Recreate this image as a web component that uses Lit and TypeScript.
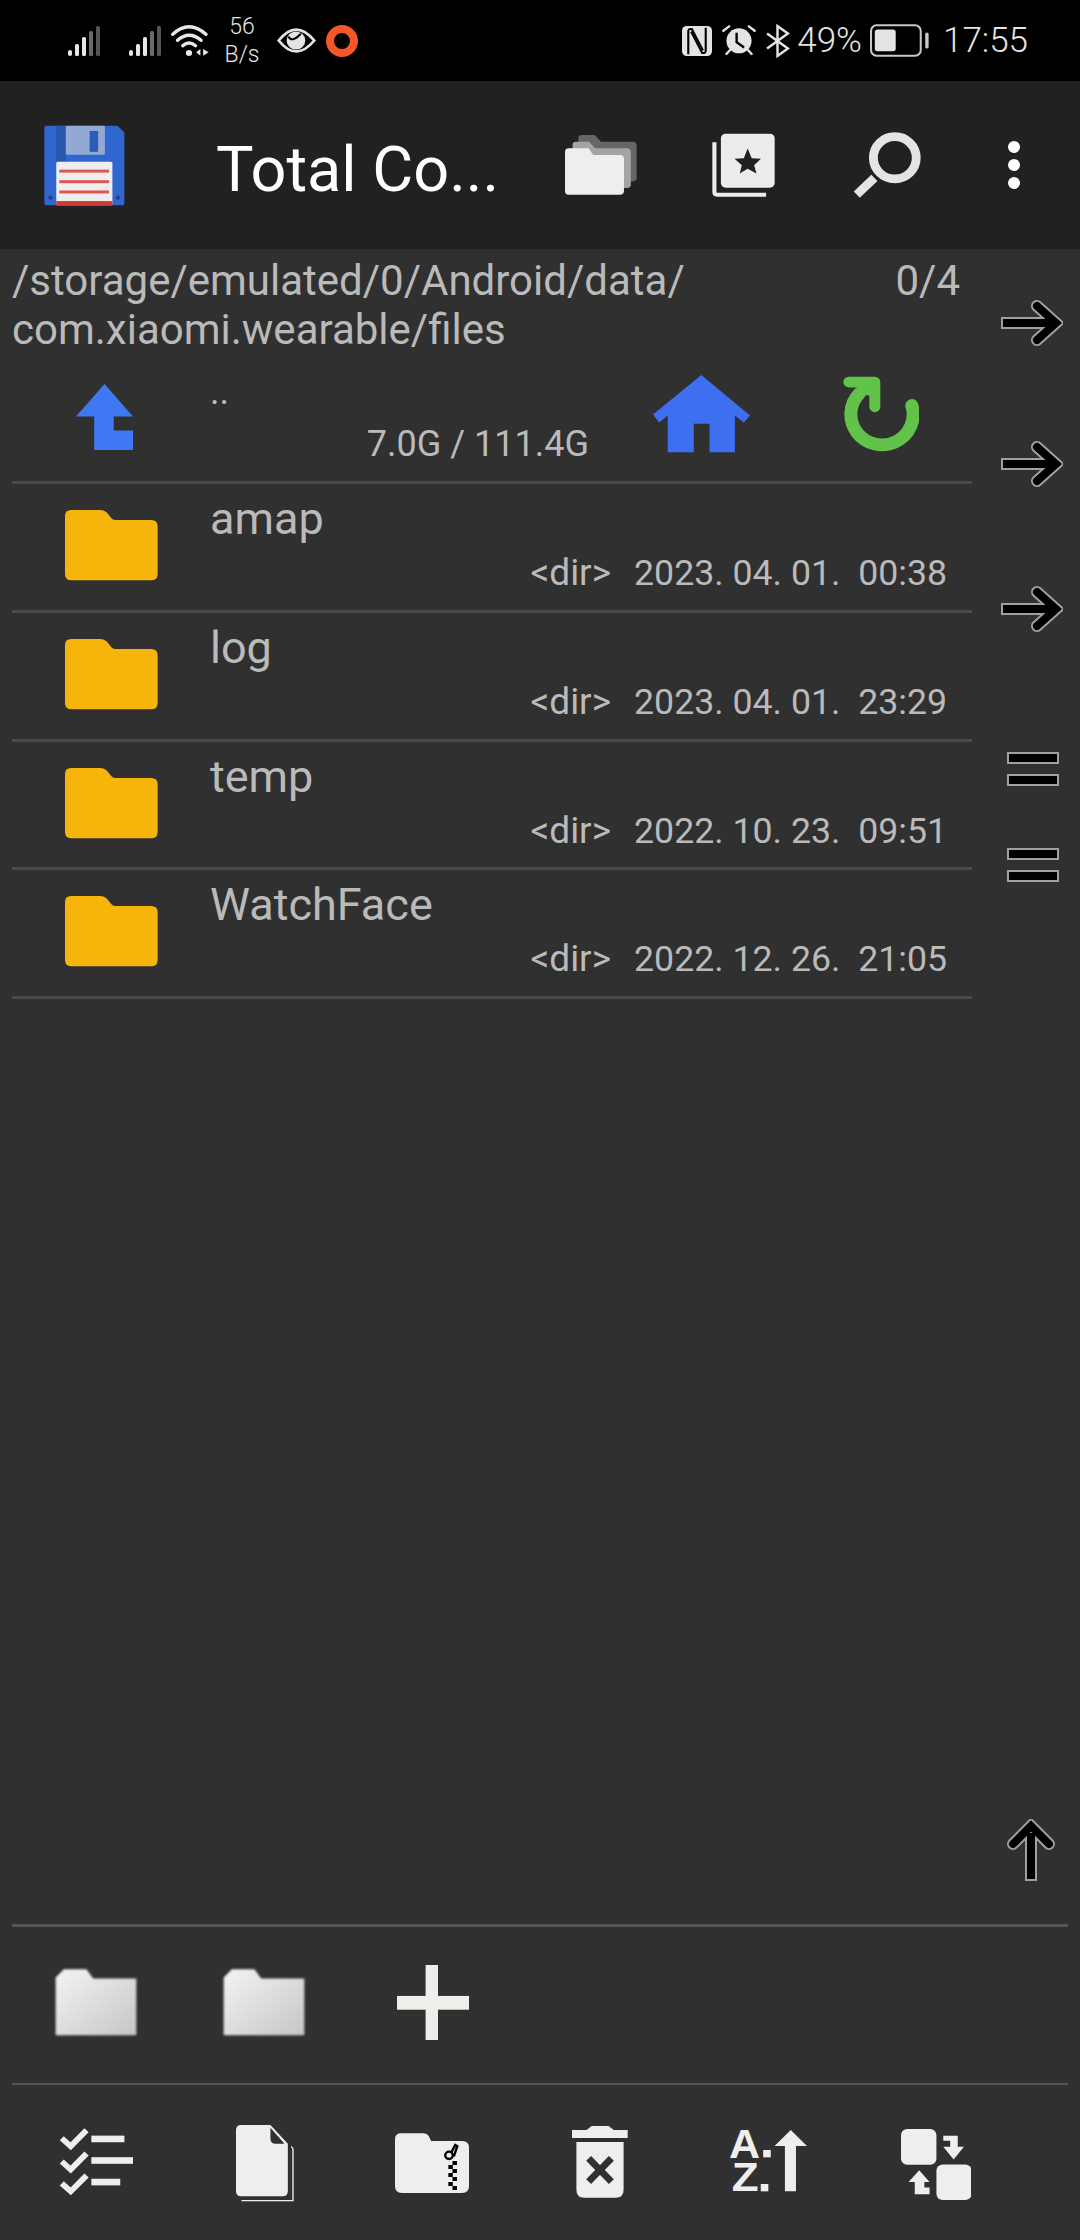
import { LitElement, html, css, svg } from 'lit';
import { customElement } from 'lit/decorators.js';

const FILES = [
  { name: 'amap', date: '2023. 04. 01.', time: '00:38' },
  { name: 'log', date: '2023. 04. 01.', time: '23:29' },
  { name: 'temp', date: '2022. 10. 23.', time: '09:51' },
  { name: 'WatchFace', date: '2022. 12. 26.', time: '21:05' },
];

// viewBoxes are measured from the zoomed crops, hence preserveAspectRatio none
const signal = html`<svg class="signal" width="32" height="30" viewBox="0 0 32 30">
  <rect x="0" y="24" width="4" height="6" rx="2" fill="#e6e6e6"></rect>
  <rect x="7" y="18" width="4" height="12" rx="1.5" fill="#e6e6e6"></rect>
  <rect x="14" y="11" width="4" height="19" rx="1.5" fill="#e6e6e6"></rect>
  <rect x="21" y="5" width="4" height="25" rx="1.5" fill="#6a6a6a"></rect>
  <rect x="28" y="0" width="4" height="30" rx="1.5" fill="#555"></rect>
</svg>`;

const rightArrow = html`<svg class="arrow" width="62" height="48" viewBox="0 0 62 48">
  <g fill="none" stroke="#a0a0a0" stroke-width="12" stroke-linecap="round">
    <path d="M0 24H52" stroke-linecap="butt"></path>
    <path d="M36 7L55 24L36 41"></path>
  </g>
  <g fill="none" stroke="#000" stroke-width="8" stroke-linecap="round">
    <path d="M2 24H52" stroke-linecap="butt"></path>
    <path d="M36 7L55 24L36 41"></path>
  </g>
</svg>`;

const bars = html`<svg class="bars" width="52" height="34" viewBox="0 0 52 34">
  <rect x="1" y="1" width="50" height="10" fill="#000" stroke="#a0a0a0" stroke-width="2"></rect>
  <rect x="1" y="23" width="50" height="10" fill="#000" stroke="#a0a0a0" stroke-width="2"></rect>
</svg>`;

const folderPath = svg`<path d="M206 780H292Q302 780 310 788L322 804Q326 810 334 810H438Q457 810 457 829V972Q457 991 438 991H207Q188 991 188 972V799Q188 780 206 780Z"></path>`;

const grayFolder = html`<svg class="gray-folder" width="82" height="69" viewBox="158 203 240 208" preserveAspectRatio="none">
  <defs>
    <linearGradient id="gf" x1="0" y1="0" x2="1" y2="1">
      <stop offset="0" stop-color="#f4f4f4"></stop>
      <stop offset="1" stop-color="#c6c6c6"></stop>
    </linearGradient>
  </defs>
  <path fill="url(#gf)" d="M160 232L184 207H250L270 235H396V406H160Z"></path>
</svg>`;

@customElement('app-root')
export class AppRoot extends LitElement {
  static styles = css`
    :host {
      display: block;
      width: 1080px;
      height: 2240px;
      background: #303030;
      font-family: Roboto, "Noto Sans", sans-serif;
      color: #bababa;
      overflow: hidden;
    }
    svg {
      display: block;
      flex: none;
    }

    .status {
      height: 81px;
      background: #000;
      color: #e4e4e4;
      display: flex;
      align-items: center;
      padding-left: 68px;
      padding-right: 52px;
      font-weight: 300;
    }
    .signal + .signal { margin-left: 29px; }
    .wifi { margin-left: 10px; }
    .speed {
      width: 60px;
      margin-left: 3px;
      text-align: center;
      font-size: 23px;
      line-height: 28px;
    }
    .eye { margin-left: 4.5px; }
    .ring { margin-left: 10.5px; }
    .status-right {
      margin-left: auto;
      display: flex;
      align-items: center;
      font-size: 35px;
    }
    .nfc { margin-left: 4px; }
    .alarm { margin-left: 10px; }
    .bt { margin-left: 9px; }
    .pct { margin-left: 7px; }
    .battery { margin-left: 8px; }
    .clock { margin-left: 13px; }

    .toolbar {
      height: 168px;
      background: #212121;
      display: flex;
      align-items: flex-start;
      padding-left: 44px;
    }
    .floppy { margin-top: 44px; }
    .title {
      width: 349px;
      margin-left: 91px;
      margin-top: 33px;
      font-size: 63px;
      line-height: 112px;
      color: #fff;
      white-space: nowrap;
    }
    .folders { margin-top: 54px; }
    .star { margin: 52px 0 0 74.5px; }
    .search { margin: 51px 0 0 79.5px; }
    .dots { margin: 60px 0 0 87px; }

    .main {
      height: 1675px;
      display: flex;
    }
    .panel {
      width: 960px;
      margin-left: 12px;
    }
    .path-row {
      height: 106px;
      display: flex;
      justify-content: space-between;
      font-size: 42px;
      line-height: 49px;
      padding-top: 7px;
      box-sizing: border-box;
      padding-right: 12px;
    }
    .parent {
      height: 129px;
      box-sizing: border-box;
      border-bottom: 3px solid #4a4a4a;
      display: flex;
      align-items: flex-start;
    }
    .up { margin: 29px 0 0 64px; }
    .parent-body {
      width: 379px;
      margin-left: 77px;
    }
    .dotdot {
      font-size: 36px;
      line-height: 40px;
      margin-top: 17px;
    }
    .space {
      font-size: 36px;
      line-height: 44px;
      text-align: right;
      margin-top: 10px;
    }
    .home { margin: 20px 0 0 64px; }
    .refresh { margin: 21px 0 0 93px; }

    .row {
      height: 128.75px;
      box-sizing: border-box;
      border-bottom: 3px solid #4a4a4a;
      display: flex;
      align-items: flex-start;
    }
    .row svg {
      fill: #f7b50c;
      margin: 26px 52px 0 53px;
    }
    .row-body {
      flex: 1;
      padding-right: 25px;
    }
    .name {
      font-size: 45px;
      line-height: 50px;
      margin-top: 10px;
    }
    .meta {
      display: flex;
      justify-content: flex-end;
      align-items: baseline;
      gap: 23px;
      font-size: 35.7px;
      line-height: 44px;
      margin-top: 7px;
    }
    .dir { font-size: 37px; }
    .stamp { white-space: pre; }

    .side {
      width: 108px;
      display: flex;
      flex-direction: column;
      padding-top: 50px;
      padding-left: 29px;
      padding-bottom: 43px;
      box-sizing: border-box;
    }
    .arrow + .arrow { margin-top: 93px; }
    .arrow + .arrow + .arrow { margin-top: 97px; }
    .bars { margin: 119px 0 0 6px; }
    .bars + .bars { margin-top: 62px; }
    .up-small {
      margin-top: auto;
      margin-left: 6px;
    }

    .shortcuts {
      height: 159px;
      box-sizing: border-box;
      margin: 0 12px;
      border-top: 3px solid #555;
      display: flex;
      align-items: flex-start;
    }
    .gray-folder {
      margin: 41px 0 0 43px;
      filter: blur(1.2px);
    }
    .gray-folder + .gray-folder { margin-left: 86px; }
    .plus {
      margin: 38px 0 0 92px;
      filter: blur(0.7px);
    }

    .tools {
      height: 157px;
      box-sizing: border-box;
      margin: 0 12px;
      border-top: 2px solid #555;
      display: flex;
      align-items: flex-start;
    }
    .t-check { margin: 43px 0 0 46.5px; }
    .t-doc { margin: 40px 0 0 103px; }
    .t-zip { margin: 48px 0 0 101.5px; }
    .t-trash { margin: 41px 0 0 103px; }
    .t-az { margin: 43px 0 0 101px; overflow: visible; }
    .t-swap { margin: 44px 0 0 93.5px; }
  `;

  render() {
    return html`
      <div class="status">
        ${signal}${signal}
        <svg class="wifi" width="38" height="32" viewBox="497 72 110 96" preserveAspectRatio="none">
          <g fill="none" stroke="#e8e8e8" stroke-linecap="round">
            <path stroke-width="10" d="M502 100Q549 55 598 100"></path>
            <path stroke-width="10" d="M516 118Q549 88 584 118"></path>
            <path stroke-width="10" d="M531 134Q549 118 568 134"></path>
          </g>
          <circle cx="549" cy="156" r="9" fill="#e8e8e8"></circle>
          <path fill="#e8e8e8" d="M582 144V164L570 154ZM590 144L606 154L590 164Z"></path>
        </svg>
        <div class="speed">56<br />B/s</div>
        <svg class="eye" width="39" height="27" viewBox="803 80 113 80" preserveAspectRatio="none">
          <path fill="#000" stroke="#e4e4e4" stroke-width="8" d="M808 120Q858 55 911 120Q858 185 808 120Z"></path>
          <circle cx="858" cy="120" r="27" fill="#e4e4e4"></circle>
          <path fill="none" stroke="#000" stroke-width="6" d="M836 108Q846 128 872 100"></path>
        </svg>
        <svg class="ring" width="32" height="32" viewBox="0 0 32 32">
          <circle cx="16" cy="16" r="12" fill="none" stroke="#f4572a" stroke-width="8"></circle>
        </svg>
        <div class="status-right">
          <svg class="nfc" width="30" height="30" viewBox="430 75 86 90" preserveAspectRatio="none">
            <rect x="430" y="75" width="86" height="90" rx="14" fill="#e4e4e4"></rect>
            <path fill="none" stroke="#000" stroke-width="6" d="M448 160V92Q448 82 458 84L490 148"></path>
            <path fill="none" stroke="#000" stroke-width="6" d="M498 80V148Q498 158 488 156L456 92"></path>
          </svg>
          <svg class="alarm" width="34" height="31" viewBox="545 75 100 92" preserveAspectRatio="none">
            <circle cx="595" cy="122" r="37" fill="#e4e4e4"></circle>
            <path fill="none" stroke="#000" stroke-width="7" d="M588 98V126L610 142"></path>
            <path fill="none" stroke="#e4e4e4" stroke-width="7" stroke-linecap="round"
              d="M549 92L566 79M641 92L624 79M558 161L568 150M632 161L622 150"></path>
          </svg>
          <svg class="bt" width="25" height="34" viewBox="672 70 72 100" preserveAspectRatio="none">
            <path fill="none" stroke="#e4e4e4" stroke-width="7"
              d="M678 98L738 142L708 164V76L738 98L678 142"></path>
          </svg>
          <span class="pct">49%</span>
          <svg class="battery" width="60" height="33" viewBox="970 72 175 98" preserveAspectRatio="none">
            <rect x="973" y="76" width="145" height="90" rx="16" fill="none" stroke="#c8c8c8" stroke-width="6"></rect>
            <rect x="984" y="88" width="61" height="65" rx="8" fill="#e4e4e4"></rect>
            <rect x="1131" y="97" width="10" height="48" rx="5" fill="#c8c8c8"></rect>
          </svg>
          <span class="clock">17:55</span>
        </div>
      </div>

      <div class="toolbar">
        <svg class="floppy" width="81" height="81" viewBox="126 373 238 245" preserveAspectRatio="none">
          <path fill="#2f66d0" d="M134 375H342L362 396V608Q362 616 354 616H134Q127 616 127 608V382Q127 375 134 375Z"></path>
          <rect x="162" y="375" width="28" height="108" fill="#2a55ad"></rect>
          <rect x="190" y="375" width="115" height="88" rx="4" fill="#93a9d3"></rect>
          <rect x="260" y="391" width="25" height="63" fill="#2b5cb8"></rect>
          <rect x="162" y="484" width="165" height="132" rx="5" fill="#eee"></rect>
          <rect x="171" y="508" width="146" height="9" fill="#df5650"></rect>
          <rect x="171" y="540" width="146" height="9" fill="#df5650"></rect>
          <rect x="171" y="571" width="146" height="9" fill="#df5650"></rect>
          <rect x="162" y="603" width="165" height="13" fill="#d23a36"></rect>
          <circle cx="145" cy="593" r="6" fill="#1f3f80"></circle>
          <circle cx="343" cy="593" r="6" fill="#1f3f80"></circle>
        </svg>
        <div class="title">Total Co...</div>
        <svg class="folders" width="72" height="60" viewBox="73 405 210 181" preserveAspectRatio="none">
          <path fill="#666" d="M122 405H160L178 425H270Q282 425 282 437V535Q282 545 270 545H122Q112 545 112 535V415Q112 405 122 405Z"></path>
          <path fill="#a4a4a4" d="M105 425H143L161 445H253Q265 445 265 457V555Q265 565 253 565H105Q95 565 95 555V435Q95 425 105 425Z"></path>
          <path fill="#eee" d="M84 445H142L155 465H233Q245 465 245 477V574Q245 585 233 585H84Q73 585 73 574V456Q73 445 84 445Z"></path>
        </svg>
        <svg class="star" width="63" height="64" viewBox="497 400 184 193" preserveAspectRatio="none">
          <rect x="523" y="402" width="157" height="163" rx="14" fill="#ececec"></rect>
          <path fill="none" stroke="#ececec" stroke-width="12" d="M504 428V578Q504 586 512 586H655"></path>
          <path fill="#212121" d="M601 447L613 476L640 478L620 497L627 522L601 508L578 522L584 497L563 478L590 476Z"></path>
        </svg>
        <svg class="search" width="67" height="66" viewBox="910 395 197 197" preserveAspectRatio="none">
          <circle cx="1030" cy="472" r="63" fill="none" stroke="#e4e4e4" stroke-width="26"></circle>
          <path stroke="#e4e4e4" stroke-width="26" d="M970 532L918 582"></path>
        </svg>
        <svg class="dots" width="12" height="50" viewBox="0 0 12 50">
          <circle cx="6" cy="6" r="6" fill="#fff"></circle>
          <circle cx="6" cy="24" r="6" fill="#fff"></circle>
          <circle cx="6" cy="42" r="6" fill="#fff"></circle>
        </svg>
      </div>

      <div class="main">
        <div class="panel">
          <div class="path-row">
            <div>/storage/emulated/0/Android/data/<br />com.xiaomi.wearable/files</div>
            <div>0/4</div>
          </div>
          <div class="parent">
            <svg class="up" width="57" height="66" viewBox="222 403 166 197" preserveAspectRatio="none">
              <path fill="#3f78f2" d="M305 403L388 500H332V542H388V600H275V500H222Z"></path>
            </svg>
            <div class="parent-body">
              <div class="dotdot">..</div>
              <div class="space">7.0G / 111.4G</div>
            </div>
            <svg class="home" width="97" height="78" viewBox="327 373 283 235" preserveAspectRatio="none">
              <path fill="#3d6ff0" d="M468 373L610 495L592 516L566 495V606H492V520H446V606H370V495L345 516L327 492Z"></path>
            </svg>
            <svg class="refresh" width="76" height="77" viewBox="880 378 222 230" preserveAspectRatio="none">
              <g fill="none" stroke="#62c24a" stroke-linecap="round" stroke-linejoin="round">
                <path stroke-width="38" d="M1081 466A91 91 0 1 1 928 430"></path>
                <path stroke-width="32" d="M897 396H973V470"></path>
              </g>
              <path fill="#62c24a" d="M925 400H980V440L925 432Z"></path>
            </svg>
          </div>
          ${FILES.map(
            (f) => html`
              <div class="row">
                <svg width="93" height="71" viewBox="188 780 270 213" preserveAspectRatio="none">${folderPath}</svg>
                <div class="row-body">
                  <div class="name">${f.name}</div>
                  <div class="meta">
                    <span class="dir">&lt;dir&gt;</span>
                    <span class="stamp">${f.date}  ${f.time}</span>
                  </div>
                </div>
              </div>
            `
          )}
        </div>
        <div class="side">
          ${rightArrow}${rightArrow}${rightArrow}${bars}${bars}
          <svg class="up-small" width="48" height="62" viewBox="0 0 48 62">
            <g fill="none" stroke="#a0a0a0" stroke-width="12" stroke-linecap="round">
              <path d="M24 62V14" stroke-linecap="butt"></path>
              <path d="M6 25L24 7L42 25"></path>
            </g>
            <g fill="none" stroke="#000" stroke-width="8" stroke-linecap="round">
              <path d="M24 60V14" stroke-linecap="butt"></path>
              <path d="M6 25L24 7L42 25"></path>
            </g>
          </svg>
        </div>
      </div>

      <div class="shortcuts">
        ${grayFolder}${grayFolder}
        <svg class="plus" width="72" height="75" viewBox="1153 197 209 223" preserveAspectRatio="none">
          <rect x="1236" y="197" width="36" height="223" fill="#eeeeea"></rect>
          <rect x="1153" y="289" width="209" height="41" fill="#eeeeea"></rect>
        </svg>
      </div>

      <div class="tools">
        <svg class="t-check" width="74" height="68" viewBox="170 685 215 205" preserveAspectRatio="none">
          <g fill="none" stroke="#eee" stroke-width="17">
            <path d="M178 716L204 740L250 692"></path>
            <path d="M178 786L204 810L250 762"></path>
            <path d="M178 852L204 876L250 828"></path>
          </g>
          <g fill="#eee">
            <rect x="264" y="708" width="96" height="20"></rect>
            <rect x="264" y="773" width="121" height="20"></rect>
            <rect x="264" y="838" width="84" height="20"></rect>
          </g>
        </svg>
        <svg class="t-doc" width="58" height="77" viewBox="684 674 170 230" preserveAspectRatio="none">
          <path fill="none" stroke="#eee" stroke-width="4" d="M846 738Q851 742 851 748V900H700"></path>
          <path fill="#eee" d="M700 674H785L836 730V872Q836 887 821 887H699Q684 887 684 872V690Q684 674 700 674Z"></path>
          <path fill="#303030" d="M785 682L826 730H800Q785 730 785 715Z"></path>
        </svg>
        <svg class="t-zip" width="74" height="60" viewBox="1147 698 215 180" preserveAspectRatio="none">
          <path fill="#eee" d="M1165 699H1230Q1240 699 1245 707L1252 722H1342Q1362 722 1362 742V858Q1362 878 1342 878H1167Q1147 878 1147 858V717Q1147 699 1165 699Z"></path>
          <circle cx="1304" cy="765" r="11" fill="none" stroke="#000" stroke-width="7"></circle>
          <path fill="none" stroke="#000" stroke-width="7" d="M1310 758L1322 734L1328 738L1318 768"></path>
          <g fill="#000">
            <rect x="1314" y="782" width="13" height="12"></rect>
            <rect x="1302" y="794" width="13" height="12"></rect>
            <rect x="1314" y="806" width="13" height="12"></rect>
            <rect x="1302" y="818" width="13" height="12"></rect>
            <rect x="1314" y="830" width="13" height="12"></rect>
            <rect x="1302" y="845" width="13" height="12"></rect>
            <rect x="1314" y="857" width="13" height="12"></rect>
          </g>
        </svg>
        <svg class="t-trash" width="56" height="72" viewBox="92 1038 165 216" preserveAspectRatio="none">
          <path fill="#eee" d="M92 1050H135L150 1038H200L215 1050H256V1074H92Z"></path>
          <path fill="#eee" d="M105 1086H244V1230Q244 1253 221 1253H128Q105 1253 105 1230Z"></path>
          <path stroke="#303030" stroke-width="20" d="M141 1135L208 1205M208 1135L141 1205"></path>
        </svg>
        <svg class="t-az" width="78" height="64" viewBox="550 1044 226 192" preserveAspectRatio="none">
          <g fill="#eee" font-family="Liberation Sans, sans-serif" font-weight="700" font-size="122">
            <text x="550" y="1133" textLength="90" lengthAdjust="spacingAndGlyphs">A</text>
            <text x="558" y="1234" textLength="78" lengthAdjust="spacingAndGlyphs">Z</text>
          </g>
          <rect x="649" y="1110" width="22" height="22" fill="#eee"></rect>
          <rect x="642" y="1212" width="22" height="22" fill="#eee"></rect>
          <path fill="#eee" d="M729 1050L776 1098H744V1234H712V1098H682Z"></path>
        </svg>
        <svg class="t-swap" width="70.5" height="71" viewBox="1047 1047 205 212" preserveAspectRatio="none">
          <rect x="1047" y="1047" width="103" height="107" rx="18" fill="#eee"></rect>
          <rect x="1150" y="1153" width="102" height="106" rx="18" fill="#eee"></rect>
          <path fill="#eee" d="M1170 1067H1212V1100H1230L1200 1138L1170 1100H1190V1082H1170Z"></path>
          <path fill="#eee" d="M1100 1170L1130 1205H1115V1222H1130V1242H1087V1205H1069Z"></path>
        </svg>
      </div>
    `;
  }
}
